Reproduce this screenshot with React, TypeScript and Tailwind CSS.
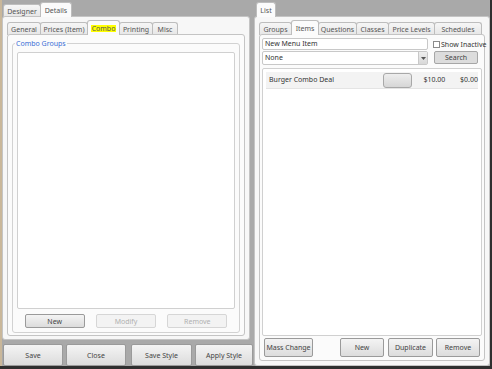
import React from "react";

const font = { fontFamily: '"Noto Sans", "Open Sans", sans-serif' };

function Btn({ children, w, h = "h-[15px]", disabled = false, cls = "" }: { children?: React.ReactNode; w: string; h?: string; disabled?: boolean; cls?: string }) {
  return (
    <div
      className={`${w} ${h} ${cls} shrink-0 flex items-center justify-center rounded-[2px] border text-[7px] leading-none ${
        disabled
          ? "border-[#d6d6d6] bg-[#f3f3f3] text-[#b0b0b0]"
          : "border-[#9a9a9a] bg-gradient-to-b from-[#f4f4f4] to-[#dcdcdc] text-[#444]"
      }`}
    >
      {children}
    </div>
  );
}

function Tab({ children, selected = false, w }: { children: React.ReactNode; selected?: boolean; w: string }) {
  return (
    <div
      className={`${w} shrink-0 whitespace-nowrap flex items-center justify-center border border-b-0 border-[#bdbdbd] rounded-t-[3px] text-[7px] leading-none text-[#555] -mr-px ${
        selected ? "h-[15px] bg-[#fbfbfb] relative z-10" : "h-[13px] mt-[2px] bg-gradient-to-b from-[#f6f6f6] to-[#e6e6e6]"
      }`}
    >
      {children}
    </div>
  );
}

export default function App() {
  return (
    <div style={font} className="w-[492px] h-[369px] bg-[#2f2f2f] overflow-hidden">
      <div className="w-[490px] h-[366px] bg-[#a9a9a9] flex gap-[4px] border-l-[2px] border-[#c9b79a]">
        {/* Left column */}
        <div className="w-[248px] flex flex-col">
          <div className="h-[17px] flex items-end pl-[1px]">
            <Tab w="w-[38px]">Designer</Tab>
            <Tab w="w-[32px]" selected>Details</Tab>
          </div>
          <div className="h-[324px] bg-[#f7f7f7] border border-[#c4c4c4] rounded-[3px] -mt-px flex flex-col px-[4px] pt-[4px] pb-[3px]">
            <div className="h-[14px] flex items-end">
              <Tab w="w-[34px]">General</Tab>
              <Tab w="w-[48px]">Prices (Item)</Tab>
              <Tab w="w-[33px]" selected>
                <span className="bg-[#ffff00] px-[1px]">Combo</span>
              </Tab>
              <Tab w="w-[34px]">Printing</Tab>
              <Tab w="w-[26px]">Misc</Tab>
            </div>
            <div className="flex-1 -mt-px bg-[#fbfbfb] border border-[#c4c4c4] rounded-[3px] px-[4px] pt-[8px] pb-[2px] flex">
              <div className="relative flex-1 border border-[#d2d2d2] rounded-[3px] flex flex-col px-[4px] pt-[8px] pb-[4px]">
                <div className="absolute -top-[5px] left-[2px] bg-[#fbfbfb] px-[1px] text-[7px] leading-[9px] text-[#3a6ed6]">Combo Groups</div>
                <div className="flex-1 bg-white border border-[#d0d0d0] rounded-[2px]" />
                <div className="flex justify-around pt-[5px] px-[2px]">
                  <Btn w="w-[60px]" h="h-[14px]">New</Btn>
                  <Btn w="w-[60px]" h="h-[14px]" disabled>Modify</Btn>
                  <Btn w="w-[60px]" h="h-[14px]" disabled>Remove</Btn>
                </div>
              </div>
            </div>
          </div>
          <div className="flex-1 flex items-end gap-[3px] pl-[1px]">
            <Btn w="w-[60px]" h="h-[22px]">Save</Btn>
            <Btn w="w-[60px]" h="h-[22px]">Close</Btn>
            <Btn w="w-[61px]" h="h-[22px]" cls="ml-[2px]">Save Style</Btn>
            <Btn w="w-[58px]" h="h-[22px]">Apply Style</Btn>
          </div>
        </div>

        {/* Right column */}
        <div className="w-[236px] flex flex-col">
          <div className="h-[17px] flex items-end pl-[2px]">
            <Tab w="w-[20px]" selected>List</Tab>
          </div>
          <div className="flex-1 bg-[#f7f7f7] border border-[#c4c4c4] rounded-[3px] -mt-px flex flex-col px-[4px] pt-[4px] pb-[4px]">
            <div className="h-[14px] flex items-end">
              <Tab w="w-[33px]">Groups</Tab>
              <Tab w="w-[28px]" selected>Items</Tab>
              <Tab w="w-[39px]">Questions</Tab>
              <Tab w="w-[33px]">Classes</Tab>
              <Tab w="w-[47px]">Price Levels</Tab>
              <Tab w="w-[48px]">Schedules</Tab>
            </div>
            <div className="flex-1 -mt-px bg-[#fbfbfb] border border-[#c4c4c4] rounded-[3px] px-[2px] pt-[3px] pb-[3px] flex flex-col">
              <div className="flex">
                <div className="w-[166px] shrink-0 flex flex-col gap-[1px]">
                  <div className="h-[12px] bg-white border border-[#c8c8c8] rounded-[2px] px-[2px] text-[7px] leading-[10px] text-[#333]">New Menu Item</div>
                  <div className="h-[14px] bg-white border border-[#c8c8c8] rounded-[2px] flex items-center pl-[2px] text-[7px] text-[#333]">
                    <span className="flex-1">None</span>
                    <div className="w-[9px] h-[12px] bg-gradient-to-b from-[#eeeeee] to-[#d8d8d8] border-l border-[#c8c8c8] flex items-center justify-center">
                      <svg width="5" height="3" viewBox="0 0 5 3"><path d="M0 0h5L2.5 3z" fill="#555" /></svg>
                    </div>
                  </div>
                </div>
                <div className="flex flex-col gap-[1px] w-[50px] shrink-0 ml-[5px]">
                  <div className="h-[12px] flex items-center text-[7px] text-[#333] leading-none whitespace-nowrap">
                    <span className="w-[7px] h-[7px] shrink-0 border border-[#8a8a8a] bg-white mr-[1px]" />
                    Show Inactive
                  </div>
                  <Btn w="w-[44px]" h="h-[13px]" cls="ml-[1px] !bg-none !bg-[#dcdcdc] !border-[#a6a6a6]">Search</Btn>
                </div>
              </div>
              <div className="flex-1 mt-[3px] bg-white border border-[#d0d0d0] rounded-[2px] p-[3px]">
                <div className="h-[17px] flex items-center bg-[#f3f3f3] border-b border-[#e4e4e4] text-[7px] text-[#333] pl-[3px]">
                  <span className="w-[115px]">Burger Combo Deal</span>
                  <div className="w-[29px] h-[15px] rounded-[3px] border border-[#a8a8a8] bg-gradient-to-b from-[#eeeeee] to-[#d6d6d6]" />
                  <span className="w-[34px] text-right">$10.00</span>
                  <span className="w-[33px] text-right">$0.00</span>
                </div>
              </div>
              <div className="flex items-center pt-[2px] px-[2px]">
                <Btn w="w-[49px]" h="h-[19px]">Mass Change</Btn>
                <div className="flex-1" />
                <Btn w="w-[44px]" h="h-[19px]">New</Btn>
                <Btn w="w-[45px]" h="h-[19px]" cls="ml-[4px]">Duplicate</Btn>
                <Btn w="w-[44px]" h="h-[19px]" cls="ml-[3px]">Remove</Btn>
              </div>
            </div>
          </div>
        </div>
      </div>
    </div>
  );
}
